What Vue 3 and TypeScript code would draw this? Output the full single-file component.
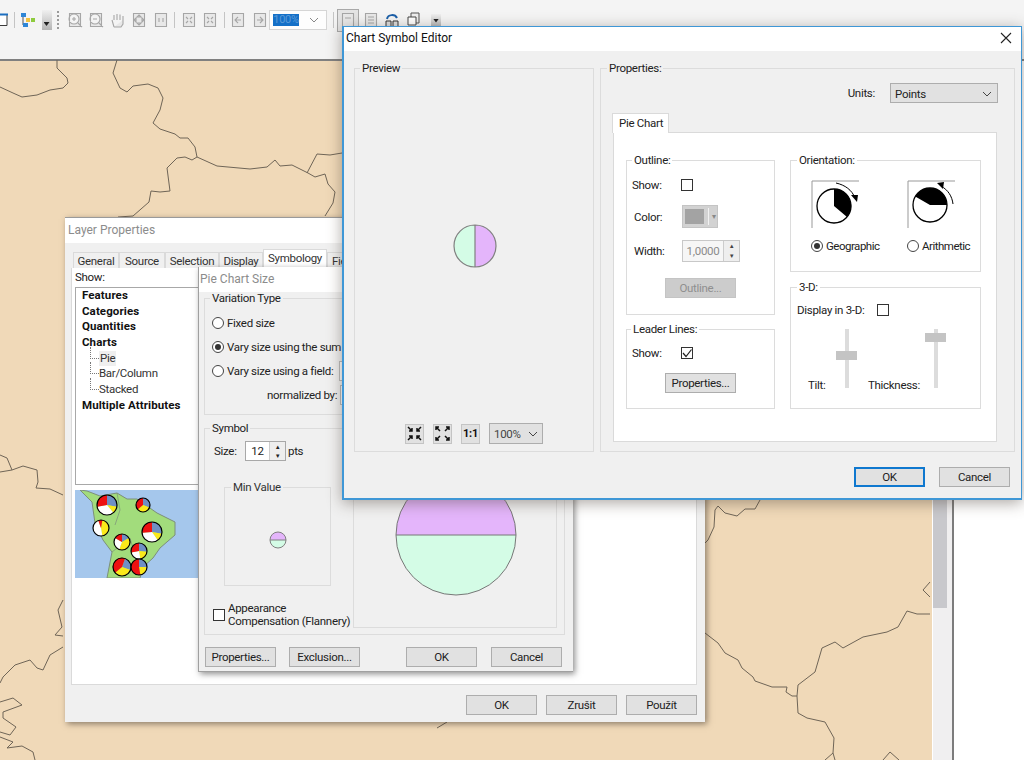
<script setup lang="ts">
interface Slice { from: number; to: number; color: string }
interface Pie { x: number; y: number; r: number; slices: Slice[] }

const RED = '#ee1111'
const BLUE = '#6f8fc4'
const YEL = '#fbe91a'
const WHT = '#ffffff'

// clockwise degrees from 12 o'clock
function wedge(cx: number, cy: number, r: number, from: number, to: number): string {
  const pt = (a: number) => {
    const t = ((a - 90) * Math.PI) / 180
    return `${(cx + r * Math.cos(t)).toFixed(2)} ${(cy + r * Math.sin(t)).toFixed(2)}`
  }
  const large = to - from > 180 ? 1 : 0
  return `M${cx} ${cy}L${pt(from)}A${r} ${r} 0 ${large} 1 ${pt(to)}Z`
}

function pie(x: number, y: number, r: number, stops: [number, number, string][]): Pie {
  return { x, y, r, slices: stops.map(([from, to, color]) => ({ from, to, color })) }
}

const pies: Pie[] = [
  pie(32, 15, 10, [[0, 100, BLUE], [100, 140, YEL], [140, 260, WHT], [260, 360, RED]]),
  pie(68, 15, 7, [[0, 110, BLUE], [110, 230, YEL], [230, 360, RED]]),
  pie(26, 38, 8, [[10, 170, YEL], [170, 340, WHT], [340, 370, RED]]),
  pie(77, 42, 10, [[0, 100, BLUE], [100, 145, YEL], [145, 265, WHT], [265, 360, RED]]),
  pie(47, 52, 8, [[0, 60, BLUE], [60, 200, YEL], [200, 300, WHT], [300, 360, RED]]),
  pie(64, 61, 8, [[0, 95, BLUE], [95, 170, YEL], [170, 260, WHT], [260, 360, RED]]),
  pie(47, 77, 9, [[20, 110, BLUE], [110, 230, YEL], [230, 380, RED]]),
  pie(64, 77, 8, [[0, 90, BLUE], [90, 170, YEL], [170, 360, RED]]),
]

const borders = [
  'M57 60L57 68L67 78L68 83L63 88L50 90L37 95L22 97L13 93L0 87',
  'M117 60L113 73L120 88L127 92L133 86L148 84L158 88L163 98L160 110L153 123L160 129L175 134L180 138L188 138L195 147L197 157L217 166L250 169L267 167L275 160L280 166L292 165L308 173L315 177L325 174L328 184L335 192L333 203L325 216',
  'M197 157L192 160L185 157L177 158L167 168L170 191L160 192L151 191L149 202L133 216L118 217',
  'M307 173L317 154L330 155L342 153',
  'M0 455L7 458L12 470L0 472M12 470L23 466L37 470L38 482L36 488L50 489L63 495',
  'M63 600L58 610L62 627L55 635L63 636',
  'M63 647L50 655L43 670L37 668L30 660L15 665L3 677L0 683',
  'M0 702L13 698L22 705L3 712L3 718L16 727L10 735L0 732M0 737L13 742L7 748L22 746L33 752L35 760',
  'M760 500L755 509L745 509L737 516L725 513L718 506L715 510L714 527L708 540L705 543',
  'M705 633L718 643L725 653L738 660L742 668L753 677L755 681L772 687L787 687L786 692L792 696L797 696',
  'M797 696L798 685L815 672L822 648L835 642L843 648L863 637L887 632L898 627L907 611L917 614L930 614',
  'M797 696L798 713L807 718L825 722L834 738L833 753L825 760M833 753L835 760',
  'M883 760L890 752L899 760M930 582L923 590L930 597M437 728L447 722',
]

const page = 'M2.5 1.5H13.5V14.5H2.5Z'
const zoomTools: string[] = [
  page + 'M2 7a5 5 0 1 0 10 0a5 5 0 1 0-10 0M5 7H9M7 5V9M11 11L15 15',
  page + 'M2 7a5 5 0 1 0 10 0a5 5 0 1 0-10 0M5 7H9M11 11L15 15',
  'M4 15L2 8M4 8V3M7 8V2M10 8V2.5M13 8V4M13 8V12L11 15H4',
  page + 'M8 3L10 5H6ZM8 13L10 11H6ZM3 8L5 6V10ZM13 8L11 6V10Z',
  page + 'M6 6V10M10 6V10',
]
const fixedTools: string[] = [
  page + 'M5 5L7 7M11 5L9 7M5 11L7 9M11 11L9 9',
  page + 'M7 7L5 5M9 7L11 5M7 9L5 11M9 9L11 11',
]
const navTools: string[] = [
  page + 'M11 8H5M8 5L5 8L8 11',
  page + 'M5 8H11M8 5L11 8L8 11',
]
const leftTabs = ['General', 'Source', 'Selection', 'Display']
const treeTop = ['Features', 'Categories', 'Quantities', 'Charts']
const treeSub = ['Pie', 'Bar/Column', 'Stacked']
</script>

<template>
  <div class="screen">
    <header class="toolbar">
      <svg class="t-win" width="16" height="16" viewBox="0 0 16 16"><path d="M1 2.5H15V13.5H1Z" fill="#fff" stroke="#3a3a3a" /><path d="M0 2.5H16" stroke="#1d6fc0" stroke-width="2" /></svg>
      <i class="sep" />
      <svg width="16" height="16" viewBox="0 0 16 16">
        <path d="M3 5V13H6M6 8H10" fill="none" stroke="#555" />
        <rect x="1" y="1" width="5" height="4" fill="#2f86d6" />
        <rect x="6" y="6" width="4" height="4" fill="#f4c23c" />
        <rect x="11" y="6" width="4" height="4" fill="#8ecb3e" />
        <rect x="3" y="11" width="5" height="4" fill="#2f86d6" />
      </svg>
      <span class="t-drop"><b /></span>
      <i class="grip" />
      <svg v-for="d in zoomTools" :key="d" class="t-icon" width="16" height="16" viewBox="0 0 16 16"><path :d="d" /></svg>
      <i class="sep" />
      <svg v-for="d in fixedTools" :key="d" class="t-icon" width="16" height="16" viewBox="0 0 16 16"><path :d="d" /></svg>
      <i class="sep" />
      <svg v-for="d in navTools" :key="d" class="t-icon" width="16" height="16" viewBox="0 0 16 16"><path :d="d" /></svg>
      <div class="t-combo">
        <span class="t-sel">100%</span>
        <svg width="10" height="6" viewBox="0 0 10 6"><path d="M1 1L5 5L9 1" fill="none" stroke="#888" /></svg>
      </div>
      <i class="sep" />
      <span class="t-active"><svg class="t-icon" width="16" height="16" viewBox="0 0 16 16"><path :d="page + 'M5 6H11'" /></svg></span>
      <svg class="t-icon" width="16" height="16" viewBox="0 0 16 16"><path :d="page + 'M5 5H11M5 8H11M5 11H11'" /></svg>
      <svg width="16" height="16" viewBox="0 0 16 16"><path d="M2 9V15H7V9ZM9 9V15H14V9Z" fill="#ddd" stroke="#333" /><path d="M3 7C4 2 11 2 13 6" fill="none" stroke="#1b5fa8" stroke-width="2" /></svg>
      <svg width="16" height="16" viewBox="0 0 16 16"><path d="M5 1H13V11H5Z" fill="#eee" stroke="#555" /><path d="M2 5H10V13H2Z" fill="#fff" stroke="#444" /><path d="M1 15H10" stroke="#1b5fa8" stroke-width="2" /></svg>
      <span class="t-drop short"><b /></span>
    </header>

    <main class="workspace">
      <div class="map" />
      <div class="scroll"><div class="thumb" /></div>
      <div class="rest" />
    </main>

    <svg class="borders" width="1024" height="760" viewBox="0 0 1024 760">
      <path v-for="d in borders" :key="d" :d="d" />
    </svg>

    <!-- Layer Properties -->
    <section class="win layer">
      <div class="title dim">Layer Properties</div>
      <div class="tabs">
        <span v-for="t in leftTabs" :key="t" class="tab">{{ t }}</span>
        <span class="tab on">Symbology</span>
        <span class="tab">Fields</span>
      </div>
      <div class="layer-panel">
        <div class="show">Show:</div>
        <ul class="tree">
          <li v-for="t in treeTop" :key="t" class="bold">{{ t }}</li>
          <li v-for="(t, i) in treeSub" :key="t" class="sub">
            <i class="dots" /><span :class="{ picked: i === 0 }">{{ t }}</span>
          </li>
          <li class="bold">Multiple Attributes</li>
        </ul>
        <svg class="thumbmap" width="123" height="88" viewBox="0 0 123 88">
          <rect width="123" height="88" fill="#a5c7ec" />
          <path d="M5 0L12 1L25 6L42 3L52 9L62 9L82 23L100 32L100 45L85 58L78 68L68 77L65 88L32 88L37 62L28 50L20 33L17 12Z" fill="#a2dc7c" stroke="#7c8f7a" />
          <path d="M42 3L45 20L40 35M37 62L55 48L60 65" fill="none" stroke="#7c8f7a" stroke-width=".7" />
          <g v-for="p in pies" :key="p.x + '-' + p.y">
            <path v-for="s in p.slices" :key="s.from" :d="wedge(p.x, p.y, p.r, s.from, s.to)" :fill="s.color" />
            <circle :cx="p.x" :cy="p.y" :r="p.r" fill="none" stroke="#000" stroke-width="1.2" />
          </g>
        </svg>
      </div>
      <footer class="foot layer-foot">
        <button class="btn">OK</button>
        <button class="btn">Zrušit</button>
        <button class="btn">Použít</button>
      </footer>
    </section>

    <!-- Pie Chart Size -->
    <section class="win piesize">
      <div class="title dim">Pie Chart Size</div>
      <div class="pie-body">
        <fieldset class="group variation">
          <legend>Variation Type</legend>
          <label class="opt"><i class="radio" />Fixed size</label>
          <label class="opt"><i class="radio sel" />Vary size using the sum of field values</label>
          <label class="opt"><i class="radio" />Vary size using a field:<i class="field" /></label>
          <label class="opt norm">normalized by:<i class="field" /></label>
        </fieldset>
        <fieldset class="group symbol">
          <legend>Symbol</legend>
          <div class="size-row">
            <span class="size-label">Size:</span>
            <div class="spin sz"><span class="spin-val">12</span><span class="arrows"><em>▲</em><em>▼</em></span></div>
            <span class="pts">pts</span>
          </div>
          <div class="sym-cols">
            <div>
              <fieldset class="group minval">
                <legend>Min Value</legend>
                <svg width="18" height="18" viewBox="0 0 18 18">
                  <path d="M1 9A8 8 0 0 1 17 9Z" fill="#e4b5fb" />
                  <path d="M1 9A8 8 0 0 0 17 9Z" fill="#d4fce6" />
                  <path d="M1 9H17M1 9A8 8 0 0 1 17 9A8 8 0 0 1 1 9Z" fill="none" stroke="#808080" />
                </svg>
              </fieldset>
              <label class="flannery"><i class="check" /><span>Appearance<br />Compensation (Flannery)</span></label>
            </div>
            <div class="maxval">
              <svg width="122" height="122" viewBox="0 0 122 122">
                <path d="M1 61A60 60 0 0 1 121 61Z" fill="#e4b5fb" />
                <path d="M1 61A60 60 0 0 0 121 61Z" fill="#d4fce6" />
                <path d="M1 61H121M1 61A60 60 0 0 1 121 61A60 60 0 0 1 1 61Z" fill="none" stroke="#777" />
              </svg>
            </div>
          </div>
        </fieldset>
        <footer class="pie-foot">
          <button class="btn">Properties...</button>
          <button class="btn">Exclusion...</button>
          <button class="btn push">OK</button>
          <button class="btn">Cancel</button>
        </footer>
      </div>
    </section>

    <!-- Chart Symbol Editor -->
    <section class="win editor">
      <div class="title ed-title">
        <span>Chart Symbol Editor</span>
        <svg width="12" height="12" viewBox="0 0 12 12"><path d="M1 1L11 11M11 1L1 11" stroke="#222" stroke-width="1.1" /></svg>
      </div>
      <div class="ed-body">
        <fieldset class="group preview">
          <legend>Preview</legend>
          <div class="preview-in">
            <svg class="preview-pie" width="44" height="44" viewBox="0 0 44 44">
              <path d="M22 1A21 21 0 0 0 22 43Z" fill="#d4fce6" />
              <path d="M22 1A21 21 0 0 1 22 43Z" fill="#e4b5fb" />
              <path d="M22 1V43M22 1A21 21 0 0 1 22 43A21 21 0 0 1 22 1Z" fill="none" stroke="#808080" stroke-width="1.2" />
            </svg>
            <div class="preview-tools">
              <span class="mini"><svg width="15" height="15" viewBox="0 0 15 15"><path d="M1 1L5 5M5 2V5H2M14 1L10 5M10 2V5H13M1 14L5 10M5 13V10H2M14 14L10 10M10 13V10H13" fill="none" stroke="#111" stroke-width="1.5" /></svg></span>
              <span class="mini"><svg width="15" height="15" viewBox="0 0 15 15"><path d="M5 5L1 1M1 4V1H4M10 5L14 1M14 4V1H11M5 10L1 14M1 11V14H4M10 10L14 14M14 11V14H11" fill="none" stroke="#111" stroke-width="1.5" /></svg></span>
              <span class="mini one">1:1</span>
              <div class="combo pct"><span>100%</span><svg width="10" height="6" viewBox="0 0 10 6"><path d="M1 1L5 5L9 1" fill="none" stroke="#444" /></svg></div>
            </div>
          </div>
        </fieldset>

        <fieldset class="group props">
          <legend>Properties:</legend>
          <div class="units">
            <span>Units:</span>
            <div class="combo unit-combo"><span>Points</span><svg width="10" height="6" viewBox="0 0 10 6"><path d="M1 1L5 5L9 1" fill="none" stroke="#444" /></svg></div>
          </div>
          <div class="pie-tab">Pie Chart</div>
          <div class="tab-panel">
            <div class="col-l">
              <fieldset class="group outline">
                <legend>Outline:</legend>
                <div class="line first"><span class="lbl">Show:</span><i class="check" /></div>
                <div class="line color"><span class="lbl in">Color:</span>
                  <div class="colorbtn"><i class="swatch" /><i class="cbar" /><em>▾</em></div>
                </div>
                <div class="line width"><span class="lbl in">Width:</span>
                  <div class="spin wd off"><span class="spin-val">1,0000</span><span class="arrows"><em>▲</em><em>▼</em></span></div>
                </div>
                <button class="btn inner off">Outline...</button>
              </fieldset>
              <fieldset class="group leader">
                <legend>Leader Lines:</legend>
                <div class="line first"><span class="lbl">Show:</span>
                  <i class="check"><svg width="10" height="10" viewBox="0 0 10 10"><path d="M1 5L4 8.5L9.5 1.5" fill="none" stroke="#222" stroke-width="1.2" /></svg></i>
                </div>
                <button class="btn inner props-btn">Properties...</button>
              </fieldset>
            </div>
            <div class="col-r">
              <fieldset class="group orient">
                <legend>Orientation:</legend>
                <div class="orient-grid">
                  <svg width="50" height="50" viewBox="0 0 50 50">
                    <path d="M48 1H1V48" fill="none" stroke="#999" />
                    <circle cx="23" cy="26" r="17" fill="#fff" stroke="#000" stroke-width="1.3" />
                    <path :d="wedge(23, 26, 17, 0, 130)" fill="#000" />
                    <path d="M25 3C34 5 41 10 44 18" fill="none" stroke="#000" />
                    <path d="M46 22L40 15L47 15Z" fill="#000" />
                  </svg>
                  <svg width="50" height="50" viewBox="0 0 50 50">
                    <path d="M48 1H1V48" fill="none" stroke="#999" />
                    <circle cx="23" cy="25" r="17" fill="#fff" stroke="#000" stroke-width="1.3" />
                    <path :d="wedge(23, 25, 17, -60, 90)" fill="#000" />
                    <path d="M46 24C45 16 41 10 34 6" fill="none" stroke="#000" />
                    <path d="M30 3L37 2L36 9Z" fill="#000" />
                  </svg>
                  <label class="opt tight"><i class="radio sel" />Geographic</label>
                  <label class="opt tight"><i class="radio" />Arithmetic</label>
                </div>
              </fieldset>
              <fieldset class="group three">
                <legend>3-D:</legend>
                <div class="line d3"><span>Display in 3-D:</span><i class="check" /></div>
                <div class="sliders">
                  <span class="s-tilt">Tilt:</span>
                  <div class="slider"><i class="knob tilt" /></div>
                  <span class="s-thick">Thickness:</span>
                  <div class="slider"><i class="knob thick" /></div>
                </div>
              </fieldset>
            </div>
          </div>
        </fieldset>
      </div>
      <footer class="foot ed-foot">
        <button class="btn primary">OK</button>
        <button class="btn">Cancel</button>
      </footer>
    </section>
  </div>
</template>

<style>
html, body { margin: 0; background: #fff; overflow: hidden; }
</style>

<style scoped>
.screen {
  position: relative;
  width: 1024px;
  height: 760px;
  overflow: hidden;
  background: #fff;
  font: 11.5px/14px Roboto, "Liberation Sans", sans-serif;
  letter-spacing: -.3px;
  color: #222;
}
i, em { font-style: normal; }

/* toolbar */
.toolbar {
  height: 61px;
  box-sizing: border-box;
  padding-bottom: 19px;
  display: flex;
  align-items: center;
  gap: 5.5px;
  background: #f4f4f4;
  border-bottom: 2px solid #808080;
}
.toolbar svg { flex: none; }
.t-win { margin-left: -8px; }
.sep { width: 1px; height: 16px; background: #c4c4c4; flex: none; }
.grip { width: 2px; height: 18px; flex: none; border-left: 2px dotted #9a9a9a; }
.t-icon path { fill: #e8e8e8; stroke: #a6a6a6; stroke-width: 1.1; }
.t-drop {
  width: 10px; height: 20px; flex: none;
  display: flex; align-items: flex-end; justify-content: center;
  padding-bottom: 4px; box-sizing: border-box;
  background: linear-gradient(#f0f0f0, #b4b4b4);
}
.t-drop.short { height: 13px; margin-left: 4px; }
.t-drop b { width: 6px; height: 4px; background: #222; clip-path: polygon(0 0, 100% 0, 50% 100%); }
.t-combo {
  margin-left: -4px;
  width: 58px; height: 20px; flex: none;
  box-sizing: border-box;
  padding: 2px 7px 2px 3px;
  display: flex; align-items: center; justify-content: space-between;
  background: #fdfdfd;
  border: 1px solid #d5d5d5;
}
.t-sel { background: #1470c8; color: #5a9ad8; width: 26px; line-height: 12px; font-size: 11px; text-align: center; }
.t-active {
  width: 20px; height: 21px; flex: none;
  margin: 0 -2px 0 -2px;
  display: flex; align-items: center; justify-content: center;
  background: #e4e4e4; border: 1px solid #a8a8a8;
}

.workspace {
  display: flex;
  height: 699px;
}
.map { width: 932px; background: #f0d9b8; }
.scroll { width: 20px; background: #f0eff0; border-left: 1px solid #fff; box-sizing: border-box; }
.thumb { height: 547px; width: 14px; background: #c8c8cc; }
.rest { flex: 1; border-left: 2px solid #7c7c7c; background: #fff; }

.borders { position: absolute; left: 0; top: 0; pointer-events: none; }
.borders path { fill: none; stroke: #6f6557; stroke-width: 1; stroke-linejoin: round; }

/* windows */
.win {
  position: absolute;
  box-sizing: border-box;
  display: flex;
  flex-direction: column;
  background: #f0f0f0;
}
.title { height: 25px; flex: none; background: #fff; line-height: 25px; padding-left: 3px; font-size: 12px; letter-spacing: 0; }
.dim { color: #8c8c8c; }

fieldset.group {
  margin: 0;
  padding: 0;
  min-width: 0;
  border: 1px solid #dcdcdc;
  box-sizing: border-box;
}
fieldset.group > legend { padding: 0 2px; margin-left: 6px; line-height: 14px; }

.btn {
  width: 71px; height: 20px; padding: 0;
  font: inherit; letter-spacing: inherit; color: #222;
  background: #e1e1e1;
  border: 1px solid #adadad;
  flex: none;
}
.check {
  width: 12px; height: 12px; flex: none;
  box-sizing: border-box;
  display: flex; align-items: center; justify-content: center;
  border: 1px solid #333;
  background: #fff;
}
.radio {
  width: 12px; height: 12px; flex: none;
  box-sizing: border-box;
  display: flex; align-items: center; justify-content: center;
  border: 1px solid #444;
  border-radius: 50%;
  background: #fff;
}
.radio.sel::after { content: ""; width: 6px; height: 6px; border-radius: 50%; background: #333; }
.opt { display: flex; align-items: center; gap: 3px; white-space: nowrap; }
.opt.tight { letter-spacing: -.5px; }

.spin {
  display: flex; align-items: stretch;
  box-sizing: border-box;
  background: #fff;
  border: 1px solid #a8a8a8;
}
.spin-val { flex: 1; text-align: center; line-height: 19px; }
.arrows {
  width: 15px; flex: none;
  display: flex; flex-direction: column;
  background: #eee;
  border-left: 1px solid #ccc;
}
.arrows em {
  flex: 1;
  display: flex; align-items: center; justify-content: center;
  font-size: 6px; line-height: 1;
}
.combo {
  display: flex; align-items: center; justify-content: space-between;
  box-sizing: border-box;
  background: #e1e1e1;
  border: 1px solid #adadad;
  padding: 1px 4px 0;
}

/* layer properties */
.layer {
  left: 65px; top: 217px; width: 640px; height: 505px;
  box-shadow: 2px 2px 6px rgba(60, 50, 40, .55);
  border-top: 1px solid #9a9a9a;
}
.tabs { display: flex; align-items: flex-end; height: 19px; margin: 6px 0 0 8px; }
.tab {
  width: 46px; height: 16px; line-height: 16px;
  box-sizing: border-box;
  text-align: center;
  white-space: nowrap;
  background: #f0f0f0;
  border: 1px solid #dadada;
  border-bottom: 0;
  color: #333;
}
.tab:nth-child(3) { width: 54px; }
.tab:nth-child(4) { width: 44px; }
.tab:nth-child(6) { text-align: left; padding-left: 4px; width: 60px; }
.tab.on { width: 64px; height: 19px; line-height: 17px; background: #fff; }
.layer-panel {
  height: 417px;
  margin: 0 8px 0 6px;
  box-sizing: border-box;
  padding-left: 3px;
  background: #fff;
  border: 1px solid #dadada;
  border-top: 0;
}
.show { height: 19px; line-height: 19px; }
.tree {
  list-style: none;
  width: 135px; height: 198px;
  box-sizing: border-box;
  margin: 0; padding: 0 0 0 6px;
  border: 1px solid #a8a8a8;
  background: #fff;
}
.tree li { height: 15.7px; line-height: 15.7px; position: relative; }
.bold { font-weight: 700; color: #111; letter-spacing: .1px; }
.sub { padding-left: 17px; color: #333; display: flex; }
.dots {
  position: absolute; left: 8px; top: -4px;
  width: 8px; height: 11px;
  border-left: 1px dotted #777;
  border-bottom: 1px dotted #777;
}
.picked { background: #efefef; padding: 0 1px; }
.thumbmap { display: block; margin-top: 5px; }
.foot { display: flex; justify-content: flex-end; }
.layer-foot { gap: 9px; padding: 10px 8px 0 0; }

/* pie chart size */
.piesize {
  left: 198px; top: 267px; width: 375px; height: 405px;
  box-shadow: 2px 2px 6px rgba(50, 50, 50, .55);
  border-left: 1px solid #a0a0a0;
  border-bottom: 1px solid #a0a0a0;
}
.piesize .title { padding-left: 1px; }
.pie-body { flex: 1; padding: 0 8px 0 5px; }
.variation { height: 124px; padding: 6px 0 0 7px !important; margin-top: -1px !important; }
.variation > legend { margin-left: -2px !important; }
.variation > .opt { height: 24px; width: 227px; }
.field {
  width: 100px; height: 20px; margin-left: auto;
  flex: none;
  box-sizing: border-box;
  border: 1px solid #bbb; background: #fff;
}
.norm { padding-left: 55px; box-sizing: border-box; }
.symbol { height: 214px; margin-top: 6px !important; padding: 6px 0 0 8px !important; }
.symbol > legend { margin-left: -3px !important; }
.size-row { display: flex; align-items: center; gap: 5px; height: 20px; padding-left: 1px; }
.sz { width: 41px; height: 20px; }
.size-label { width: 26px; }
.pts { margin-left: -3px; }
.sym-cols { display: flex; margin-top: 19px; }
.sym-cols > div:first-child { width: 140px; }
.minval { width: 107px; height: 106px; margin-left: 11px !important; }
.minval legend { color: #333; }
.minval svg { display: block; margin: 37px auto 0; }
.flannery { display: flex; align-items: center; gap: 3px; margin: 16px 0 0; line-height: 12.5px; white-space: nowrap; }
.maxval {
  width: 204px; height: 141px;
  margin-top: 7px;
  box-sizing: border-box;
  border: 1px solid #dcdcdc;
  display: flex; justify-content: center; align-items: flex-start;
}
.maxval svg { margin: -14px 0 0 2px; }
.pie-foot { display: flex; margin-top: 12px; padding-left: 1px; }
.pie-foot .btn + .btn { margin-left: 13px; }
.pie-foot .btn.push { margin-left: 46px; }
.pie-foot .btn.push + .btn { margin-left: 14px; }

/* chart symbol editor */
.editor {
  left: 342px; top: 26px; width: 680px; height: 474px;
  border: 1px solid #3f97d6;
  border-left-width: 2px;
  border-bottom-width: 2px;
  box-shadow: 0 3px 14px rgba(70, 60, 50, .45);
}
.ed-title {
  height: 24px;
  display: flex; align-items: center; justify-content: space-between;
  padding: 0 9px 2px 2px;
  box-sizing: border-box;
  color: #111;
}
.ed-body { display: flex; gap: 6px; padding: 10px 0 0 10px; }
.preview { width: 240px; height: 391px; }
.preview > legend { margin-left: 5px !important; }
.preview-in {
  height: 375px;
  box-sizing: border-box;
  display: flex; flex-direction: column; align-items: center;
  padding-top: 149px;
}
.preview-pie { margin-left: 2px; }
.preview-tools { margin-top: auto; margin-bottom: 6px; display: flex; align-items: center; gap: 9px; }
.mini {
  width: 19px; height: 20px;
  box-sizing: border-box;
  display: flex; align-items: center; justify-content: center;
  background: #e1e1e1;
  border: 1px solid #c4c4c4;
}
.mini.one { font-weight: 700; font-size: 11px; color: #111; }
.pct { width: 54px; height: 21px; }
.pct span { color: #444; }
.props { width: 415px; height: 391px; padding-left: 12px !important; }
.props > legend { margin-left: -6px !important; }
.units { display: flex; align-items: center; justify-content: flex-end; gap: 15px; padding: 8px 16px 0 0; }
.unit-combo { width: 108px; height: 20px; padding-right: 5px; }
.pie-tab {
  width: 57px; height: 20px;
  box-sizing: border-box;
  margin: 10px 0 -1px -1px;
  position: relative;
  background: #fff;
  border: 1px solid #dadada;
  border-bottom: 0;
  padding-left: 6px;
  line-height: 18px;
  white-space: nowrap;
}
.tab-panel {
  width: 384px; height: 310px;
  box-sizing: border-box;
  display: flex;
  gap: 15px;
  padding: 20px 0 0 12px;
  background: #fff;
  border: 1px solid #dadada;
}
.col-l { width: 149px; display: flex; flex-direction: column; gap: 7px; }
.col-r { width: 191px; display: flex; flex-direction: column; gap: 8px; }
.outline { height: 162px; padding: 8px 0 0 5px !important; }
.outline > legend { margin-left: 0 !important; }
.leader { height: 87px; padding: 7px 0 0 5px !important; }
.leader > legend { margin-left: -1px !important; }
.line { display: flex; align-items: center; }
.line.first { height: 20px; }
.lbl { width: 49px; flex: none; }
.lbl.in { padding-left: 2px; box-sizing: border-box; }
.color { height: 23px; margin-top: 10px; }
.width { height: 22px; margin-top: 12px; }
.colorbtn {
  width: 36px; height: 23px;
  margin-left: 1px;
  box-sizing: border-box;
  display: flex; align-items: center;
  padding-left: 2px;
  background: #d2d2d2;
  border: 1px solid #c4c4c4;
}
.swatch { width: 19px; height: 15px; background: #a3a3a3; }
.cbar { width: 1px; height: 17px; background: #f2f2f2; margin: 0 3px 0 4px; }
.colorbtn em { font-size: 8px; color: #888; }
.wd { width: 58px; height: 22px; margin-left: 1px; color: #8b8b8b; background: #f6f6f6; border-color: #c8c8c8; }
.wd .spin-val { line-height: 20px; }
.wd .arrows em { color: #444; }
.btn.inner { display: block; margin: 16px 0 0 33px; }
.btn.props-btn { margin-top: 10px; }
.btn.off { background: #ccc; border-color: #c4c4c4; color: #8f8f8f; }
.orient { height: 119px; }
.orient-grid {
  display: grid;
  grid-template-columns: 50px 50px;
  column-gap: 46px;
  row-gap: 9px;
  padding: 13px 0 0 20px;
}
.three { height: 129px; padding: 6px 0 0 6px !important; }
.three > legend { margin-left: 0 !important; }
.d3 { gap: 13px; height: 20px; }
.sliders { display: flex; align-items: flex-end; margin-top: 9px; height: 63px; padding-left: 11px; white-space: nowrap; }
.s-tilt { width: 28px; }
.s-thick { margin: 0 7px 0 11px; width: 50px; }
.slider {
  position: relative;
  width: 21px; height: 59px;
  margin-bottom: 4px;
  background: linear-gradient(#dcdcdc, #dcdcdc) center / 4px 100% no-repeat;
}
.knob { position: absolute; left: 0; width: 21px; height: 9px; background: #c4c4c4; }
.knob.tilt { top: 22px; }
.knob.thick { top: 4px; }
.ed-foot { gap: 14px; padding: 15px 11px 0 0; }
.btn.primary { border: 2px solid #0f78cf; }
</style>
